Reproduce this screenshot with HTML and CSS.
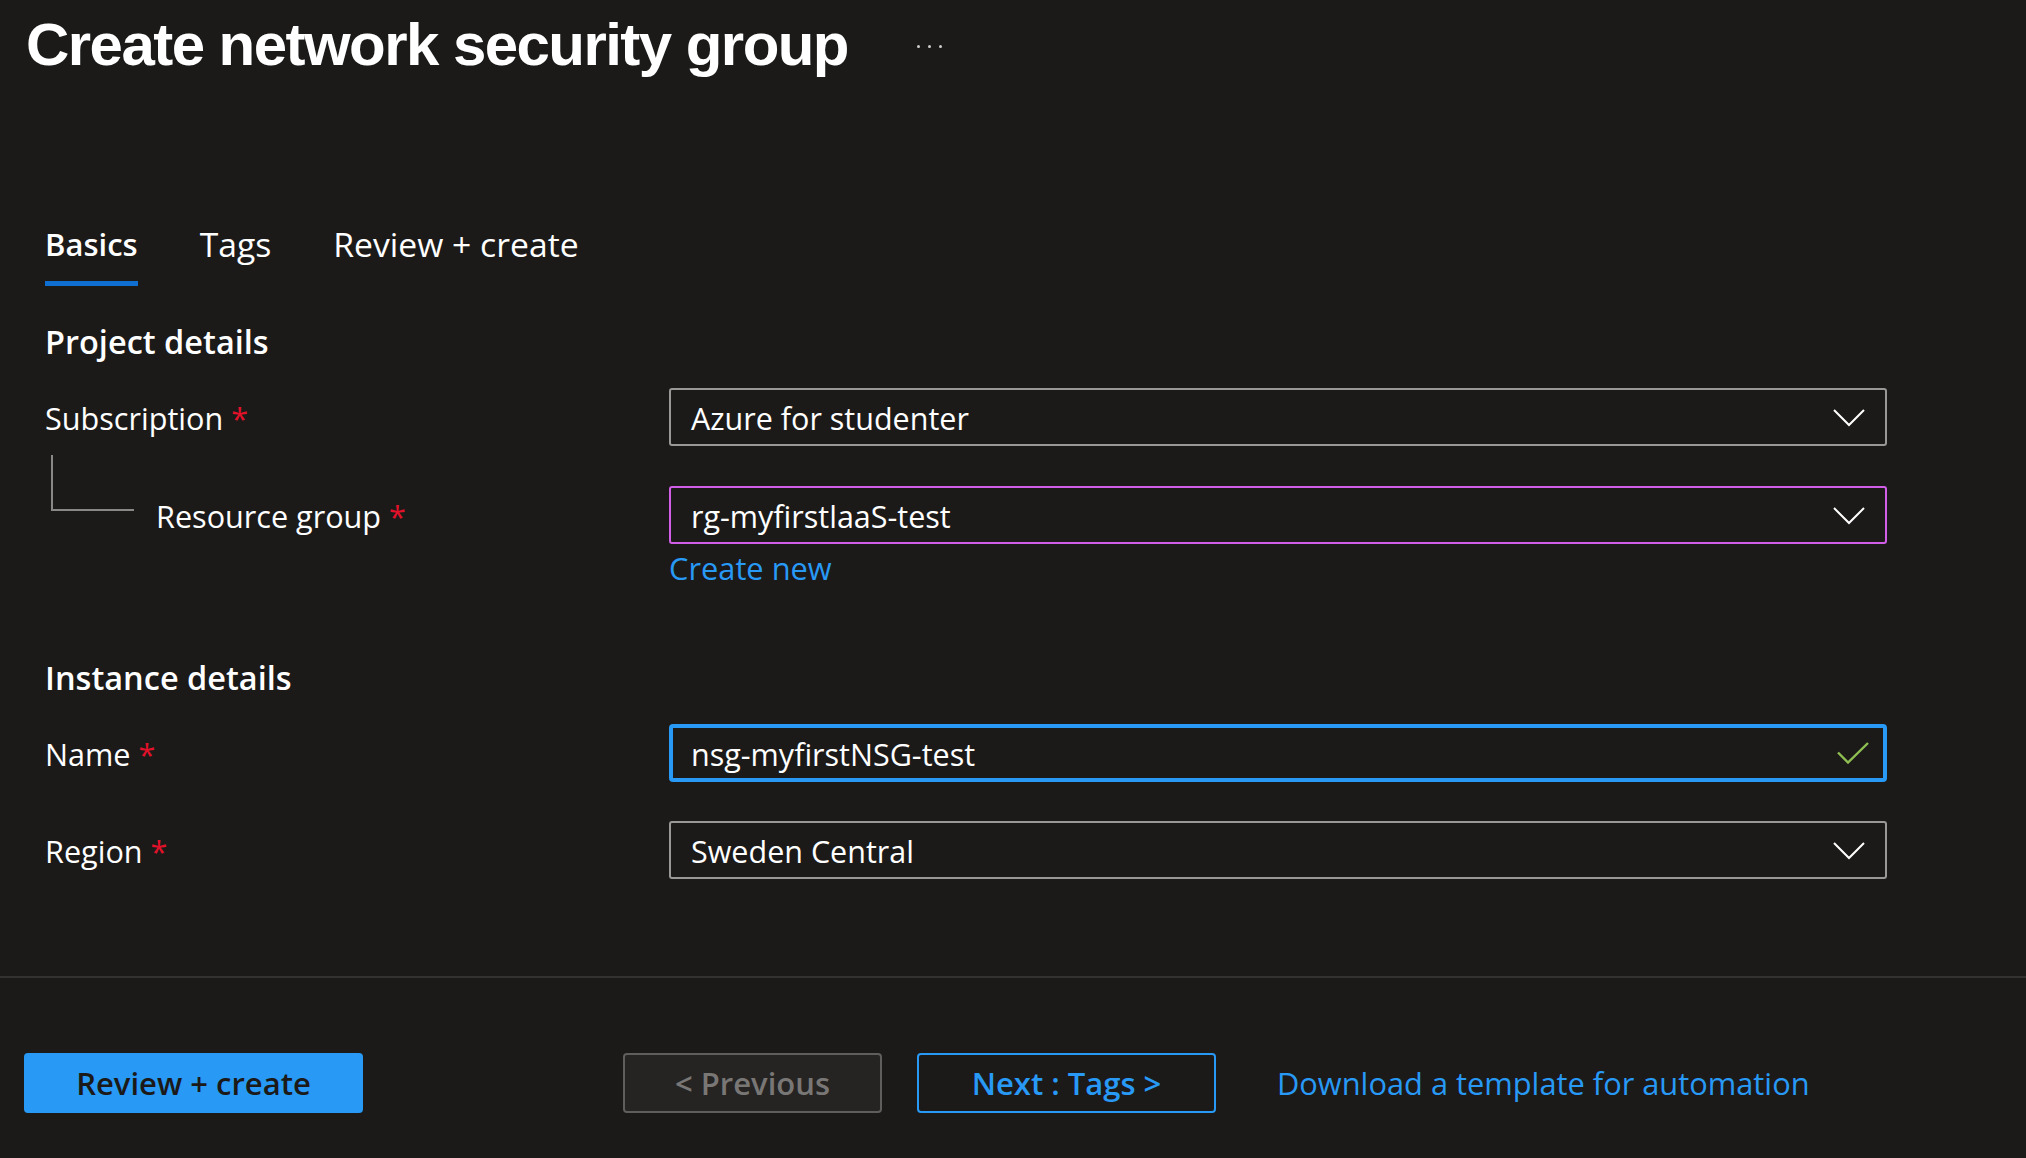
FILE: index.html
```html
<!DOCTYPE html>
<html lang="en">
<head>
<meta charset="utf-8">
<title>Create network security group</title>
<link rel="stylesheet" href="styles.css">
</head>
<body>
<div class="page">
  <header class="header">
    <h1 class="title">Create network security group</h1>
    <div class="more" aria-label="More"><span></span><span></span><span></span></div>
  </header>

  <nav class="tabs">
    <div class="tab active"><span class="tab-text">Basics</span><span class="tab-bar"></span></div>
    <div class="tab"><span class="tab-text">Tags</span></div>
    <div class="tab"><span class="tab-text">Review + create</span></div>
  </nav>

  <main class="form">
    <h2 class="section first">Project details</h2>

    <div class="row">
      <div class="label">Subscription <span class="req">*</span></div>
      <div class="control select">
        <span class="value">Azure for studenter</span>
        <svg class="chev" width="32" height="18" viewBox="0 0 32 18"><path d="M1 1 L16 16 L31 1" fill="none" stroke="#ffffff" stroke-width="2"/></svg>
      </div>
    </div>

    <div class="row row-child">
      <div class="label child">Resource group <span class="req">*</span></div>
      <div class="control select magenta">
        <span class="value">rg-myfirstlaaS-test</span>
        <svg class="chev" width="32" height="18" viewBox="0 0 32 18"><path d="M1 1 L16 16 L31 1" fill="none" stroke="#ffffff" stroke-width="2"/></svg>
      </div>
    </div>
    <div class="row-link">
      <span></span>
      <a class="link" href="#">Create new</a>
    </div>

    <h2 class="section second">Instance details</h2>

    <div class="row">
      <div class="label">Name <span class="req">*</span></div>
      <div class="control input focused">
        <span class="value">nsg-myfirstNSG-test</span>
        <svg class="check" width="32" height="22" viewBox="0 0 32 22"><path d="M1 10.5 L11 20.5 L31 1" fill="none" stroke="#8fbf52" stroke-width="2.4"/></svg>
      </div>
    </div>

    <div class="row row-region">
      <div class="label">Region <span class="req">*</span></div>
      <div class="control select">
        <span class="value">Sweden Central</span>
        <svg class="chev" width="32" height="18" viewBox="0 0 32 18"><path d="M1 1 L16 16 L31 1" fill="none" stroke="#ffffff" stroke-width="2"/></svg>
      </div>
    </div>
  </main>

  <footer class="footer">
    <button class="btn primary">Review + create</button>
    <button class="btn prev">&lt; Previous</button>
    <button class="btn next">Next : Tags &gt;</button>
    <a class="link download" href="#">Download a template for automation</a>
  </footer>
</div>
</body>
</html>
```

FILE: styles.css
```css
* { box-sizing: border-box; }

html, body {
  margin: 0;
  padding: 0;
  background: #1b1a19;
}

body {
  font-family: "Open Sans", "Noto Sans", sans-serif;
  color: #ffffff;
  width: 2026px;
  height: 1158px;
  overflow: hidden;
}

.page {
  display: flex;
  flex-direction: column;
}

/* Header */
.header {
  display: flex;
  align-items: center;
  padding: 15px 0 0 26px;
  height: 75px;
}

.title {
  margin: 0;
  font-family: "Liberation Sans", Arial, sans-serif;
  font-weight: 700;
  font-size: 60px;
  line-height: 60px;
  letter-spacing: -1.55px;
  color: #ffffff;
}

.more {
  display: flex;
  gap: 8px;
  margin-left: 69px;
  margin-top: 2px;
}

.more span {
  width: 3px;
  height: 3px;
  border-radius: 50%;
  background: #d0cecc;
}

/* Tabs */
.tabs {
  display: flex;
  gap: 62px;
  margin-top: 147px;
  padding-left: 45px;
}

.tab {
  display: flex;
  flex-direction: column;
  height: 64px;
}

.tab-text {
  font-size: 33.7px;
  line-height: 44px;
  color: #ffffff;
}

.tab.active .tab-text {
  font-size: 31px;
  font-weight: 600;
}

.tab-bar {
  margin-top: 15px;
  height: 5px;
  background: #0f6fd1;
}

/* Form */
.form {
  padding-left: 45px;
  width: 1887px;
  display: flex;
  flex-direction: column;
}

.section {
  margin: 0;
  font-size: 32.5px;
  font-weight: 600;
  line-height: 44px;
  color: #ffffff;
}

.section.first { margin-top: 34px; }
.section.second { margin-top: 67px; }

.row {
  display: grid;
  grid-template-columns: 624px 1218px;
  align-items: center;
  margin-top: 24px;
}

.row-child { margin-top: 40px; }
.row-region { margin-top: 39px; }

.label {
  font-size: 30.6px;
  line-height: 41px;
  padding-top: 3px;
  color: #ffffff;
  position: relative;
}

.label.child {
  padding-left: 111px;
}

.label.child::before {
  content: "";
  position: absolute;
  left: 6px;
  top: -38px;
  width: 81px;
  height: 54px;
  border-left: 2px solid #8a8886;
  border-bottom: 2px solid #8a8886;
}

.req {
  color: #e3112a;
}

.control {
  height: 58px;
  border: 2px solid #9a9896;
  border-radius: 3px;
  display: flex;
  align-items: center;
  justify-content: space-between;
  padding: 0 20px 0 20px;
}

.control .value {
  font-size: 30.5px;
  line-height: 41px;
  padding-top: 3px;
  color: #ffffff;
}

.control.magenta {
  border-color: #d25ee8;
}

.control.focused {
  border: 4px solid #2899f5;
  border-radius: 4px;
  padding: 0 14px 0 18px;
}

.chev { display: block; margin-top: 1px; }
.check { display: block; }

.row-link {
  display: grid;
  grid-template-columns: 624px 1218px;
  margin-top: 4px;
}

.link {
  font-size: 30.8px;
  line-height: 41px;
  color: #2899f5;
  text-decoration: none;
}

/* Footer */
.footer {
  margin-top: 97px;
  border-top: 2px solid #333231;
  display: flex;
  align-items: center;
  padding: 75px 0 0 24px;
}

.btn {
  font-family: "Open Sans", "Noto Sans", sans-serif;
  font-size: 31px;
  font-weight: 600;
  height: 60px;
  border-radius: 4px;
  padding: 0;
  line-height: 40px;
  display: flex;
  align-items: center;
  justify-content: center;
}

.btn.primary {
  width: 339px;
  background: #2899f5;
  border: none;
  color: #1b1a19;
}

.btn.prev {
  width: 259px;
  margin-left: 260px;
  background: #252423;
  border: 2px solid #5f5e5d;
  color: #797775;
}

.btn.next {
  width: 299px;
  margin-left: 35px;
  background: transparent;
  border: 2px solid #2899f5;
  color: #2899f5;
}

.download {
  margin-left: 61px;
}
```
